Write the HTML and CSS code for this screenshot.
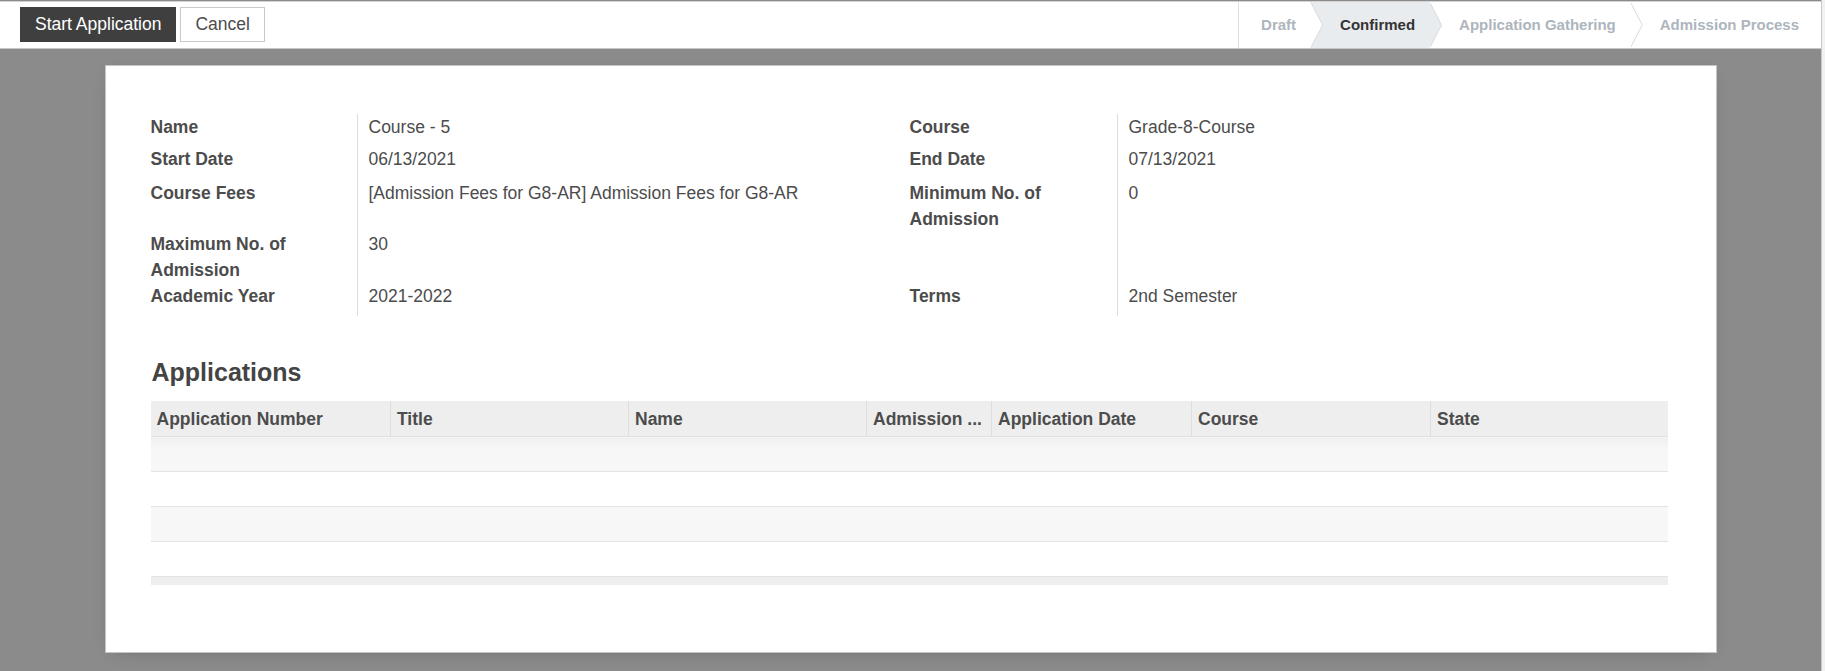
FILE: index.html
```html
<!DOCTYPE html>
<html lang="en">
<head>
    <meta charset="UTF-8">
    <title>Course - 5</title>
    <link rel="stylesheet" href="styles.css">
</head>
<body>
    <div class="page">
        <!-- Control panel: actions + stages -->
        <div class="control-panel">
            <div class="actions">
                <button class="btn btn-dark">Start Application</button>
                <button class="btn btn-light">Cancel</button>
            </div>
            <div class="statusbar">
                <div class="stage first">Draft</div>
                <div class="stage active">Confirmed</div>
                <div class="stage">Application Gathering</div>
                <div class="stage last">Admission Process</div>
            </div>
        </div>

        <div class="content">
            <div class="sheet">
                <div class="fields">
                    <div class="label">Name</div>
                    <div class="value">Course - 5</div>
                    <div class="label">Course</div>
                    <div class="value">Grade-8-Course</div>

                    <div class="label">Start Date</div>
                    <div class="value">06/13/2021</div>
                    <div class="label">End Date</div>
                    <div class="value">07/13/2021</div>

                    <div class="label">Course Fees</div>
                    <div class="value">[Admission Fees for G8-AR] Admission Fees for G8-AR</div>
                    <div class="label">Minimum No. of Admission</div>
                    <div class="value">0</div>

                    <div class="label">Maximum No. of Admission</div>
                    <div class="value">30</div>
                    <div class="label"></div>
                    <div class="value"></div>

                    <div class="label">Academic Year</div>
                    <div class="value">2021-2022</div>
                    <div class="label">Terms</div>
                    <div class="value">2nd Semester</div>
                </div>

                <h2 class="section-title">Applications</h2>
                <table class="list">
                    <colgroup>
                        <col style="width: 240px">
                        <col style="width: 238px">
                        <col style="width: 238px">
                        <col style="width: 125px">
                        <col style="width: 200px">
                        <col style="width: 239px">
                        <col style="width: 237px">
                    </colgroup>
                    <thead>
                        <tr>
                            <th>Application Number</th>
                            <th>Title</th>
                            <th>Name</th>
                            <th>Admission ...</th>
                            <th>Application Date</th>
                            <th>Course</th>
                            <th>State</th>
                        </tr>
                    </thead>
                    <tbody>
                        <tr><td></td><td></td><td></td><td></td><td></td><td></td><td></td></tr>
                        <tr><td></td><td></td><td></td><td></td><td></td><td></td><td></td></tr>
                        <tr><td></td><td></td><td></td><td></td><td></td><td></td><td></td></tr>
                        <tr><td></td><td></td><td></td><td></td><td></td><td></td><td></td></tr>
                    </tbody>
                    <tfoot>
                        <tr><td colspan="7"></td></tr>
                    </tfoot>
                </table>
            </div>
        </div>
    </div>
</body>
</html>
```

FILE: styles.css
```css
html, body {
    margin: 0;
    height: 100%;
}
body {
    font-family: "Liberation Sans", Arial, sans-serif;
    font-size: 17.5px;
    line-height: 26px;
    color: #4c4c4c;
    background-color: #f1f1f1;
}
.page {
    margin-right: 3px;
    height: 100%;
    display: flex;
    flex-direction: column;
    background-color: #8b8b8b;
    border-right: 1px solid #c8c8c8;
}

/* control panel */
.control-panel {
    display: flex;
    justify-content: space-between;
    height: 46px;
    margin-top: 1px;
    background-color: white;
    border-top: 1px solid #d4d4d4;
    border-bottom: 1px solid #c6c6c6;
}
.actions {
    display: flex;
    gap: 4px;
    padding: 5px 0 0 20px;
}
.btn {
    height: 35px;
    padding: 0 14px;
    font-family: inherit;
    font-size: 17.5px;
    border-radius: 0;
    border: 1px solid #c8c8c8;
    cursor: pointer;
}
.btn-dark {
    background-color: #3f3f3f;
    border-color: #3f3f3f;
    color: white;
}
.btn-light {
    background-color: white;
    color: #4c4c4c;
}
.statusbar {
    display: flex;
    border-left: 1px solid #dee2e6;
}
.stage {
    position: relative;
    display: flex;
    align-items: center;
    padding: 0 14px 0 30px;
    font-size: 15px;
    font-weight: bold;
    color: #adb5bd;
    background-color: white;
}
.stage.first {
    padding-left: 22px;
}
.stage.last {
    padding-right: 22px;
}
.stage::before,
.stage::after {
    content: "";
    position: absolute;
    top: 0;
    width: 12px;
    height: 100%;
    clip-path: polygon(0 0, 100% 50%, 0 100%);
}
.stage::before {
    right: -13px;
    background-color: #d6dadf;
    z-index: 1;
}
.stage::after {
    right: -12px;
    background-color: white;
    z-index: 2;
}
.stage.last::before,
.stage.last::after {
    display: none;
}
.stage.active {
    background-color: #e9ecef;
    color: #333;
}
.stage.active::after {
    background-color: #e9ecef;
}

/* sheet */
.content {
    flex: 1;
    padding-top: 16px;
}
.sheet {
    width: 1612px;
    box-sizing: border-box;
    margin: 0 auto;
    height: 588px;
    padding: 48px 47px 0 45px;
    background-color: white;
    border: 1px solid #c6c4ca;
    box-shadow: 0 4px 18px -10px rgba(0,0,0,0.35);
}
.fields {
    display: grid;
    grid-template-columns: 206px 553px 207px 1fr;
    grid-template-rows: 32px 34px 51px 52px 33px;
}
.label {
    font-weight: bold;
    padding-right: 30px;
}
.value {
    border-left: 1px solid #dcdcdc;
    padding-left: 11px;
}
.section-title {
    margin: 41px 0 14px 1px;
    font-size: 25px;
    line-height: 30px;
    font-weight: bold;
    color: #444;
}

/* list */
.list {
    width: 1517px;
    table-layout: fixed;
    border-collapse: collapse;
}
.list th {
    height: 35px;
    padding: 0 6px;
    text-align: left;
    font-size: 17.5px;
    font-weight: bold;
    color: #4c4c4c;
    background-color: #eeeeee;
    border-left: 1px solid #dedede;
    border-bottom: 1px solid #dee2e6;
    white-space: nowrap;
    overflow: hidden;
}
.list th:first-child {
    border-left: none;
}
.list td {
    height: 34px;
    padding: 0;
    border-top: 1px solid #e1e3e6;
}
.list tbody tr:nth-child(odd) td {
    background-color: #f7f7f7;
}
.list tbody tr:first-child td {
    background: linear-gradient(#efefef, #f7f7f7 12px);
}
.list tfoot td {
    height: 8px;
    background-color: #eeeeee;
}
```
